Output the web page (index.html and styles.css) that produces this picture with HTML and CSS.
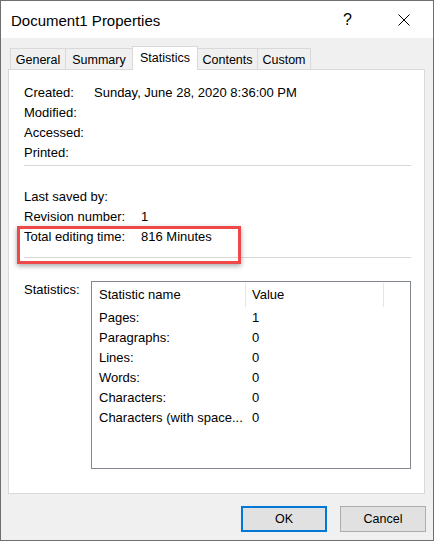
FILE: index.html
```html
<!DOCTYPE html>
<html>
<head>
<meta charset="utf-8">
<link rel="stylesheet" href="styles.css">
</head>
<body>
<div class="window">
  <div class="titlebar">
    <span class="title">Document1 Properties</span>
    <span class="help">?</span>
    <span class="close">
      <svg width="12" height="12" viewBox="0 0 12 12"><path d="M0.5 0.5 L11.5 11.5 M11.5 0.5 L0.5 11.5" stroke="#000" stroke-width="1" fill="none"/></svg>
    </span>
  </div>
  <div class="client">
    <div class="tabs">
      <div class="tab t-general">General</div>
      <div class="tab t-summary">Summary</div>
      <div class="tab t-stats active">Statistics</div>
      <div class="tab t-contents">Contents</div>
      <div class="tab t-custom">Custom</div>
    </div>
    <div class="panel">
      <div class="group">
        <div class="row"><span class="lbl lbl-a">Created:</span><span>Sunday, June 28, 2020 8:36:00 PM</span></div>
        <div class="row"><span class="lbl lbl-a">Modified:</span></div>
        <div class="row"><span class="lbl lbl-a">Accessed:</span></div>
        <div class="row"><span class="lbl lbl-a">Printed:</span></div>
      </div>
      <div class="sep sep-1"></div>
      <div class="group">
        <div class="row"><span class="lbl lbl-b">Last saved by:</span></div>
        <div class="row"><span class="lbl lbl-b">Revision number:</span><span>1</span></div>
        <div class="row highlight"><span class="lbl lbl-b">Total editing time:</span><span>816 Minutes</span></div>
      </div>
      <div class="sep sep-2"></div>
      <div class="stats">
        <div class="stats-label">Statistics:</div>
        <div class="listview">
          <div class="lv-head">
            <div class="lv-col c1">Statistic name</div>
            <div class="lv-col c2">Value</div>
            <div class="lv-col c3"></div>
          </div>
          <div class="lv-row"><span class="c1">Pages:</span><span class="c2">1</span></div>
          <div class="lv-row"><span class="c1">Paragraphs:</span><span class="c2">0</span></div>
          <div class="lv-row"><span class="c1">Lines:</span><span class="c2">0</span></div>
          <div class="lv-row"><span class="c1">Words:</span><span class="c2">0</span></div>
          <div class="lv-row"><span class="c1">Characters:</span><span class="c2">0</span></div>
          <div class="lv-row"><span class="c1">Characters (with space...</span><span class="c2">0</span></div>
        </div>
      </div>
    </div>
    <div class="buttons">
      <div class="btn default">OK</div>
      <div class="btn">Cancel</div>
    </div>
  </div>
</div>
</body>
</html>
```
FILE: styles.css
```css
* { box-sizing: border-box; }
html, body { margin: 0; padding: 0; background: #ffffff; }
body {
  font-family: "Liberation Sans", Arial, sans-serif;
  font-size: 12px;
  color: #000;
}
.window {
  width: 434px;
  height: 541px;
  border: 1px solid #6f6f6f;
  background: #f0f0f0;
  display: flex;
  flex-direction: column;
}
.titlebar {
  height: 37px;
  background: #fff;
  display: flex;
  align-items: center;
  padding-left: 10px;
  flex: none;
}
.title {
  font-size: 15px;
  flex: 1;
  padding-top: 1px;
}
.help {
  font-size: 16px;
  width: 8px;
  margin-right: 47px;
  padding-top: 1px;
}
.close {
  width: 12px;
  height: 12px;
  margin-right: 23px;
  display: flex;
}
.client {
  flex: 1;
  padding: 8px 8px 0 7px;
  display: flex;
  flex-direction: column;
}
.tabs {
  display: flex;
  align-items: flex-end;
  padding-left: 2px;
  height: 23px;
  position: relative;
  z-index: 1;
}
.tab {
  height: 21px;
  border: 1px solid #d9d9d9;
  border-bottom: none;
  background: #f0f0f0;
  margin-left: -1px;
  display: flex;
  align-items: center;
  justify-content: center;
  padding-top: 1px;
  font-size: 12.5px;
}
.tab:first-child { margin-left: 0; }
.tab.active {
  height: 24px;
  margin-bottom: -1px;
  background: #fff;
  padding-top: 0;
  padding-bottom: 2px;
  position: relative;
}
.t-general { width: 56px; }
.t-summary { width: 68px; }
.t-stats { width: 66px; }
.t-contents { width: 61px; }
.t-custom { width: 54px; }
.panel {
  border: 1px solid #d9d9d9;
  background: #fff;
  height: 425px;
  padding: 13px 13px 0 15px;
  flex: none;
  font-size: 13px;
}
.row {
  height: 20px;
  line-height: 20px;
  display: flex;
  white-space: nowrap;
}
.lbl { flex: none; }
.lbl-a { width: 70px; }
.lbl-b { width: 117px; }
.sep {
  height: 1px;
  background: #d7d7d7;
}
.sep-1 { margin: 2px 0 21px; }
.sep-2 { margin: 10px 0 22px; }
.highlight { position: relative; }
.highlight::after {
  content: "";
  position: absolute;
  left: -7px;
  top: -1px;
  width: 218px;
  height: 32px;
  border: 3px solid #ef4848;
  box-shadow: 0 2px 5px rgba(0,0,0,0.35);
}
.stats {
  display: flex;
}
.stats-label {
  width: 67px;
  line-height: 20px;
  flex: none;
}
.listview {
  margin-top: 1px;
  width: 321px;
  height: 188px;
  border: 1px solid #828790;
  background: #fff;
}
.lv-head {
  display: flex;
  height: 26px;
  padding-top: 1px;
}
.lv-col {
  height: 24px;
  line-height: 24px;
  border-right: 1px solid #e5e5e5;
}
.lv-head .c1 { width: 154px; padding-left: 7px; }
.lv-head .c2 { width: 138px; padding-left: 6px; }
.lv-head .c3 { width: 0; border-right: none; }
.lv-row {
  display: flex;
  height: 20px;
  line-height: 20px;
  white-space: nowrap;
}
.lv-row .c1 { width: 154px; padding-left: 7px; overflow: hidden; }
.lv-row .c2 { padding-left: 6px; }
.buttons {
  display: flex;
  justify-content: flex-end;
  gap: 13px;
  margin-top: 12px;
  margin-right: -1px;
}
.btn {
  width: 86px;
  height: 26px;
  border: 1px solid #adadad;
  background: #e1e1e1;
  display: flex;
  align-items: center;
  justify-content: center;
  font-size: 12.5px;
}
.btn.default {
  border: 2px solid #0078d7;
}
```
